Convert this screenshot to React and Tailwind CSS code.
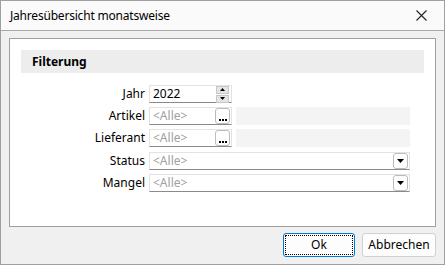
import React from 'react';

const font = { fontFamily: '"Noto Sans", "Open Sans", sans-serif' };

const Dots = () => (
    <div className="w-[15px] h-[16px] rounded-[3px] border border-[#bcbcbc] bg-white flex items-end justify-center pb-[2px] gap-[1px]">
        <span className="w-[2px] h-[2px] bg-black" />
        <span className="w-[2px] h-[2px] bg-black" />
        <span className="w-[2px] h-[2px] bg-black" />
    </div>
);

const DropBtn = () => (
    <div className="w-[15px] h-[16px] rounded-[3px] border border-[#bcbcbc] bg-white flex items-center justify-center">
        <svg width="7" height="4" viewBox="0 0 7 4"><path d="M0 0h7L3.5 4z" fill="#000" /></svg>
    </div>
);

const Spinner = () => (
    <div className="flex flex-col gap-[1px] mr-[1px]">
        <div className="w-[13px] h-[8px] bg-[#e5e5e5] border border-[#c8c8c8] flex items-center justify-center">
            <svg width="5" height="3" viewBox="0 0 5 3"><path d="M0 3h5L2.5 0z" fill="#000" /></svg>
        </div>
        <div className="w-[13px] h-[8px] bg-[#e5e5e5] border border-[#c8c8c8] flex items-center justify-center">
            <svg width="5" height="3" viewBox="0 0 5 3"><path d="M0 0h5L2.5 3z" fill="#000" /></svg>
        </div>
    </div>
);

const Row = ({ label, className = '', children }) => (
    <div className={`flex items-center h-[18px] ${className}`}>
        <div className="w-[128px] text-right pr-[4px] text-[12px] text-black leading-none">{label}</div>
        {children}
    </div>
);

const Field = ({ className, children }) => (
    <div className={`h-[18px] bg-white border border-[#e3e3e3] border-b-[#8a8a8a] flex items-center justify-between pl-[3px] pr-[1px] ${className}`}>
        {children}
    </div>
);

export default function App() {
    return (
        <div className="w-[445px] h-[265px] border border-[#a0a0a0] bg-[#f0f0f0] flex flex-col" style={font}>
            {/* Title bar */}
            <div className="h-[30px] bg-[#fafafa] border-b border-[#a8a8a8] flex items-center justify-between pl-[9px] pr-[17px] shrink-0">
                <span className="text-[12px] text-black tracking-[-0.2px]">Jahresübersicht monatsweise</span>
                <svg width="11" height="11" viewBox="0 0 11 11"><path d="M0.5 0.5l10 10M10.5 0.5l-10 10" stroke="#222" strokeWidth="1.1" /></svg>
            </div>

            <div className="flex-1 flex flex-col pl-[8px] pr-[8px] pt-[7px]">
                <div className="h-[189px] bg-white border border-[#a0a0a0] px-[11px] pt-[11px]">
                    <div className="h-[23px] bg-[#ededed] flex items-center pl-[11px] text-[12px] font-bold text-black">Filterung</div>

                    <div className="flex flex-col mt-[12px] gap-[4px]">
                        <Row label="Jahr">
                            <Field className="w-[83px]">
                                <span className="text-[12px] text-black">2022</span>
                                <Spinner />
                            </Field>
                        </Row>
                        <Row label="Artikel">
                            <Field className="w-[83px]">
                                <span className="text-[12px] text-[#a0a0a0]">&lt;Alle&gt;</span>
                                <Dots />
                            </Field>
                            <div className="ml-[4px] w-[174px] h-[18px] bg-[#f4f4f4]" />
                        </Row>
                        <Row label="Lieferant">
                            <Field className="w-[83px]">
                                <span className="text-[12px] text-[#a0a0a0]">&lt;Alle&gt;</span>
                                <Dots />
                            </Field>
                            <div className="ml-[4px] w-[174px] h-[18px] bg-[#f4f4f4]" />
                        </Row>
                        <Row label="Status" className="mt-[1px]">
                            <Field className="w-[261px]">
                                <span className="text-[12px] text-[#a0a0a0]">&lt;Alle&gt;</span>
                                <DropBtn />
                            </Field>
                        </Row>
                        <Row label="Mangel">
                            <Field className="w-[261px]">
                                <span className="text-[12px] text-[#a0a0a0]">&lt;Alle&gt;</span>
                                <DropBtn />
                            </Field>
                        </Row>
                    </div>
                </div>

                <div className="flex justify-end gap-[7px] mt-[6px]">
                    <button className="w-[72px] h-[24px] rounded-[3px] border border-[#0078d7] bg-[#fdfdfd] flex items-center justify-center p-[1px]">
                        <span className="w-full h-full border border-dotted border-black flex items-center justify-center text-[12px] text-black">Ok</span>
                    </button>
                    <button className="w-[74px] h-[24px] rounded-[3px] border border-[#d0d0d0] bg-[#fdfdfd] flex items-center justify-center text-[12px] text-black">
                        Abbrechen
                    </button>
                </div>
            </div>
        </div>
    );
}
